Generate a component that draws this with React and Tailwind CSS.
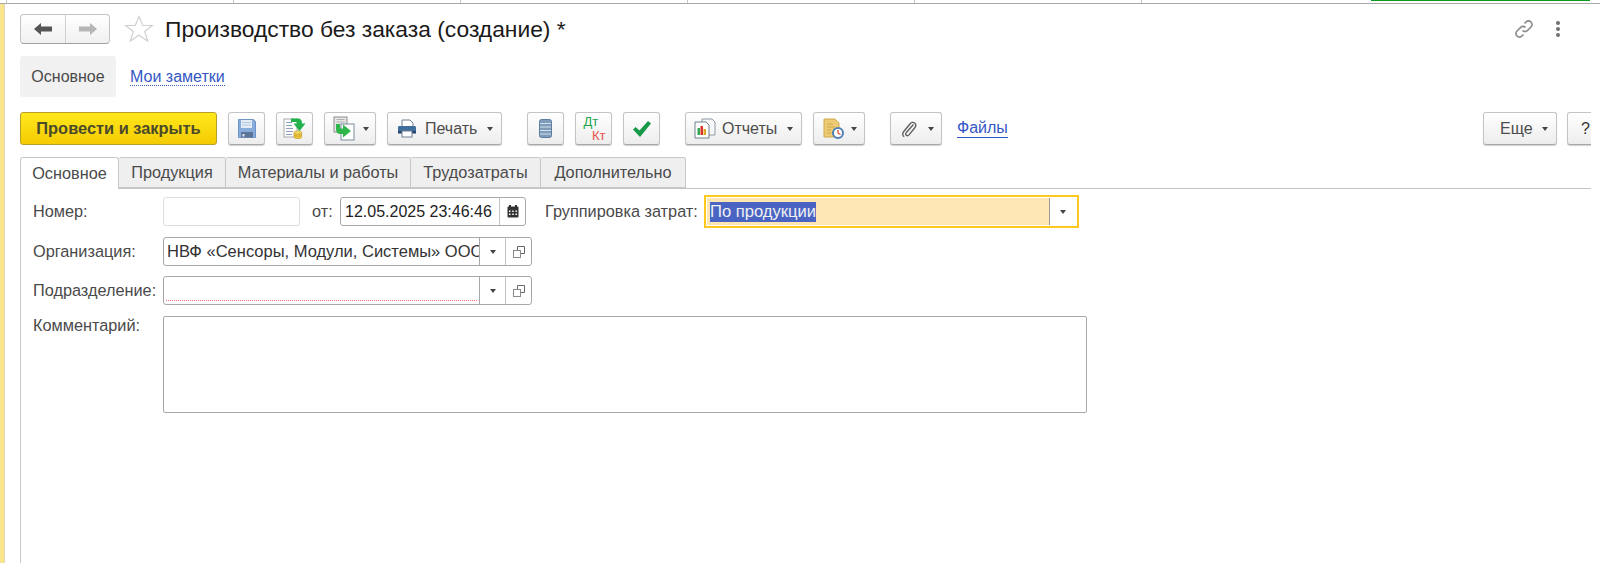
import React from 'react';

const Caret = ({ className = '' }) => (
  <svg width="6" height="4" viewBox="0 0 6 4" className={className}>
    <path d="M0 0h6L3 4z" fill="#444" />
  </svg>
);

const ToolButton = ({ className = '', children }) => (
  <div className={`flex h-[33px] shrink-0 items-center rounded-[3px] border border-[#c4c4c4] border-b-[#a8a8a8] bg-gradient-to-b from-white to-[#ededed] text-[16px] text-[#4d4d4d] shadow-[0_1px_1px_#d0d0d0] ${className}`}>
    {children}
  </div>
);

const SaveIcon = () => (
  <svg width="18" height="19" viewBox="0 0 18 19">
    <path d="M.5.500h15l2 2v16H.5z" fill="#86abdc" stroke="#6d94c6" />
    <rect x="3" y="1" width="11" height="8" fill="#e4ecf6" />
    <path d="M4 3.500h9M4 6h9" stroke="#b4c9e2" />
    <rect x="3" y="13" width="12" height="5.500" fill="#5c7594" />
    <rect x="4.500" y="15" width="2" height="2.500" fill="#dfe7f0" />
  </svg>
);

const PostIcon = () => (
  <svg width="23" height="21" viewBox="0 0 23 21">
    <rect x="1" y="1" width="13" height="18" fill="#fdfdfd" stroke="#a9a9a9" />
    <path d="M3 4.500h6M3 7.500h6M3 10.500h7M3 13.500h7M3 16.500h6" stroke="#8aa0bc" />
    <path d="M11 14.500v4.500c0 1 1.700 1.700 3.800 1.700s3.800-.7 3.800-1.700v-4.500" fill="#f0c63e" stroke="#b89322" strokeWidth=".6" />
    <path d="M11 16.500c0 1 1.700 1.700 3.800 1.700s3.800-.7 3.800-1.700" fill="none" stroke="#b89322" strokeWidth=".6" />
    <ellipse cx="14.800" cy="14.500" rx="3.800" ry="1.700" fill="#f6da6c" stroke="#b89322" strokeWidth=".6" />
    <path d="M8 .5h6.500c3.500 0 4.500 2 4.500 5h3.500L16.500 13l-6-7.500H14c0-1-.5-1.500-1.500-1.500H8z" fill="#22b14c" />
  </svg>
);

const LinkedDocsIcon = () => (
  <svg width="22" height="25" viewBox="0 0 22 25">
    <rect x="1" y="1" width="13" height="15" fill="#e6e6e6" stroke="#8d8d8d" />
    <path d="M3.500 3.500h8M3.500 6h8" stroke="#b0b0b0" />
    <rect x="8" y="8" width="13" height="16" fill="#fff" stroke="#7d8ca0" />
    <path d="M3 8h4v3c0 1 .5 1.500 1.500 1.500H10V8.500l8 6.500-8 6.500V18H8c-3.500 0-5-2-5-5z" fill="#2fb64a" />
  </svg>
);

const PrintIcon = () => (
  <svg width="20" height="19" viewBox="0 0 20 19">
    <path d="M5 1h8l3 3v5H5z" fill="#fff" stroke="#6f7f90" />
    <path d="M1 8.500c0-1 .6-1.500 1.500-1.500h15c.9 0 1.500.5 1.500 1.500V14H1z" fill="#3f6d9c" />
    <rect x="1" y="12" width="18" height="2.500" fill="#24486e" />
    <rect x="5" y="12" width="10" height="6" fill="#fff" stroke="#6f7f90" />
  </svg>
);

const StackIcon = () => (
  <svg width="13" height="19" viewBox="0 0 13 19">
    <rect x=".5" y=".5" width="12" height="18" rx="2" fill="#7d9cbb" stroke="#5c7d9e" />
    <path d="M1 4.500h11M1 8h11M1 11.500h11M1 15h11" stroke="#d5e0ea" strokeWidth="1.200" />
  </svg>
);

const CheckIcon = () => (
  <svg width="18" height="16" viewBox="0 0 18 16">
    <path d="M0 8.500l2.500-2.500 4 3.500L15 0l3 2.500L7 16z" fill="#149947" />
  </svg>
);

const ReportIcon = () => (
  <svg width="22" height="21" viewBox="0 0 22 21">
    <path d="M8 1h10l3 3v13H8z" fill="#f7f7f7" stroke="#8f9aa6" />
    <path d="M1 4h11l3 3v13H1z" fill="#fff" stroke="#6f7f8f" />
    <rect x="3.500" y="10" width="2.500" height="7" fill="#3aa655" />
    <rect x="6.500" y="8" width="2.500" height="9" fill="#d9342b" />
    <rect x="9.500" y="11" width="2.500" height="6" fill="#e0a526" />
  </svg>
);

const ScheduleIcon = () => (
  <svg width="22" height="21" viewBox="0 0 22 21">
    <path d="M1 1h11l4 4v14H1z" fill="#eccb74" stroke="#cfaa4a" />
    <path d="M4 6h6M4 9h8M4 12h4M4 15h4" stroke="#cfaa4a" />
    <circle cx="15" cy="15" r="5" fill="#fff" stroke="#4f7fb5" strokeWidth="2" />
    <path d="M15 12v3l2.500 1.500" fill="none" stroke="#d9483b" strokeWidth="1.300" />
  </svg>
);

const ClipIcon = () => (
  <svg width="16" height="18" viewBox="0 0 18 20">
    <path d="M14 5l-8 9c-1 1.200-.8 2.300 0 3s2 .6 3-.4l6.500-8c1.800-2.200 1.300-4-.2-5.300s-3.500-1-5 .8l-7 8.400c-2.200 2.700-1.500 5 .2 6.200" fill="none" stroke="#5c5c5c" strokeWidth="1.500" />
  </svg>
);

const CopyIcon = () => (
  <svg width="12" height="12" viewBox="0 0 12 12">
    <path d="M4.500 4V.5h7v7H8" fill="none" stroke="#666" />
    <rect x=".5" y="4.500" width="7" height="7" fill="none" stroke="#8a8a8a" />
  </svg>
);

const CalendarIcon = () => (
  <svg width="12" height="13" viewBox="0 0 12 13">
    <rect x="0.500" y="1.500" width="11" height="11" rx="1" fill="#333" />
    <rect x="2" y="0" width="2" height="3" fill="#333" />
    <rect x="8" y="0" width="2" height="3" fill="#333" />
    <path d="M2 5.500h1.500v1.500H2zM5.200 5.500h1.500v1.500H5.200zM8.500 5.500H10v1.500H8.500zM2 8.500h1.500V10H2zM5.200 8.500h1.500V10H5.200zM8.500 8.500H10V10H8.500z" fill="#fff" />
  </svg>
);

const PickerField = ({ text, required }) => (
  <div className="flex h-[29px] w-[369px] items-stretch rounded-[3px] border border-[#a8a8a8] bg-white">
    <div className="relative flex w-[316px] items-center overflow-hidden whitespace-nowrap border-r border-[#a8a8a8] pl-[3px] text-[16.5px] text-[#333]">
      {text}
      {required && <div className="absolute bottom-[3px] left-[2px] right-[2px] border-b border-dotted border-[#f56a6a]" />}
    </div>
    <div className="flex w-[26px] items-center justify-center border-r border-[#c4c4c4]"><Caret /></div>
    <div className="flex flex-1 items-center justify-center"><CopyIcon /></div>
  </div>
);

const tabs = [
  ['Продукция', 'w-[107px]'],
  ['Материалы и работы', 'w-[185px]'],
  ['Трудозатраты', 'w-[130px]'],
  ['Дополнительно', 'w-[145px]'],
];

export default function App() {
  return (
    <div className="flex h-[563px] w-[1600px] flex-col overflow-hidden bg-white font-['Liberation_Sans',Arial,sans-serif] text-[16px] text-[#4a4a4a]">
      {/* верхняя полоса вкладок окна */}
      <div className="flex h-[4px] shrink-0 border-b border-[#a9a9a9] pl-[6px]">
        <div className="w-[227px] border-l border-[#c8c8c8]" />
        <div className="w-[227px] border-l border-[#c8c8c8]" />
        <div className="w-[227px] border-l border-[#c8c8c8]" />
        <div className="w-[227px] border-l border-[#c8c8c8]" />
        <div className="w-[227px] border-l border-[#c8c8c8]" />
        <div className="w-[227px] border-l border-[#c8c8c8]" />
        <div className="ml-[3px] h-[1px] w-[219px] bg-[#0b9a1f]" />
      </div>

      <div className="flex min-h-0 flex-1">
        <div className="w-[5px] shrink-0 border-r border-[#e0d9b8] bg-[#fbe48e]" />

        <div className="relative w-[1586px] shrink-0 overflow-hidden">
          {/* заголовок */}
          <div className="mt-[10px] flex h-[30px] items-center pl-[15px]">
            <div className="flex h-[30px] w-[90px] rounded-[4px] border border-[#c4c4c4] border-b-[#a0a0a0] bg-gradient-to-b from-white to-[#f0f0f0]">
              <div className="flex w-[45px] items-center justify-center border-r border-[#d0d0d0]">
                <svg width="18" height="12" viewBox="0 0 18 12"><path d="M0 6l7-6v3.500h11v5H7V12z" fill="#555" /></svg>
              </div>
              <div className="flex flex-1 items-center justify-center">
                <svg width="18" height="12" viewBox="0 0 18 12"><path d="M18 6l-7-6v3.500H0v5h11V12z" fill="#b5b5b5" /></svg>
              </div>
            </div>
            <svg width="30" height="28" viewBox="0 0 30 28" className="ml-[14px]">
              <path d="M15 1.500l3.800 9h9.700l-7.800 6 3 9.500-8.700-5.800L6.300 26l3-9.500-7.800-6h9.700z" fill="#fff" stroke="#d0d0d0" strokeWidth="1.200" />
            </svg>
            <div className="ml-[11px] whitespace-nowrap text-[22.8px] leading-[30px] text-[#1a1a1a]">Производство без заказа (создание) *</div>
            <svg width="20" height="20" viewBox="0 0 20 20" className="ml-auto" fill="none" stroke="#8a8a8a" strokeWidth="1.700">
              <path d="M8.500 11.500a3.500 3.500 0 0 0 5 0l3.500-3.500a3.500 3.500 0 0 0-5-5l-1.500 1.500" />
              <path d="M11.500 8.500a3.500 3.500 0 0 0-5 0L3 12a3.500 3.500 0 0 0 5 5l1.500-1.500" />
            </svg>
            <div className="ml-[22px] mr-[31px] flex flex-col gap-[2px]">
              <div className="size-[4px] rounded-full bg-[#707070]" />
              <div className="size-[4px] rounded-full bg-[#707070]" />
              <div className="size-[4px] rounded-full bg-[#707070]" />
            </div>
          </div>

          {/* панель разделов */}
          <div className="mt-[12px] flex h-[41px] items-center pl-[15px]">
            <div className="flex h-[41px] w-[96px] items-center justify-center rounded-[3px] bg-[#f1f1f1] text-[#4a4a4a]">Основное</div>
            <div className="ml-[14px] border-b border-dotted border-[#3a5fc0] leading-[17px] text-[#3457c4]">Мои заметки</div>
          </div>

          {/* командная панель */}
          <div className="mt-[15px] flex h-[33px] items-center pl-[15px]">
            <div className="flex h-[33px] w-[197px] shrink-0 items-center justify-center rounded-[3px] border border-[#b89f2a] bg-gradient-to-b from-[#ffe81a] to-[#f4cb00] text-[16.4px] font-bold text-[#4a4a2a]">Провести и закрыть</div>
            <ToolButton className="ml-[11px] w-[37px] justify-center"><SaveIcon /></ToolButton>
            <ToolButton className="ml-[11px] w-[37px] justify-center"><PostIcon /></ToolButton>
            <ToolButton className="ml-[11px] w-[52px] pl-[8px]"><LinkedDocsIcon /><Caret className="ml-[8px]" /></ToolButton>
            <ToolButton className="ml-[11px] w-[115px] pl-[9px]"><PrintIcon /><span className="ml-[8px]">Печать</span><Caret className="ml-[10px]" /></ToolButton>
            <ToolButton className="ml-[25px] w-[37px] justify-center"><StackIcon /></ToolButton>
            <ToolButton className="ml-[11px] w-[37px] justify-center">
              <div className="relative h-[27px] w-[24px] text-[13px] leading-[13px]">
                <span className="absolute left-[2px] top-[0px] text-[#1fa552]">Дт</span>
                <span className="absolute right-[0px] bottom-[0px] text-[#e8504a]">Кт</span>
              </div>
            </ToolButton>
            <ToolButton className="ml-[11px] w-[37px] justify-center"><CheckIcon /></ToolButton>
            <ToolButton className="ml-[25px] w-[117px] pl-[8px]"><ReportIcon /><span className="ml-[6px]">Отчеты</span><Caret className="ml-[10px]" /></ToolButton>
            <ToolButton className="ml-[11px] w-[52px] pl-[9px]"><ScheduleIcon /><Caret className="ml-[6px]" /></ToolButton>
            <ToolButton className="ml-[25px] w-[52px] pl-[10px]"><ClipIcon /><Caret className="ml-[11px]" /></ToolButton>
            <div className="ml-[15px] border-b border-[#2a55c0] leading-[18px] text-[#3457c4]">Файлы</div>
            <ToolButton className="ml-auto w-[74px] pl-[16px]">Еще<Caret className="ml-[9px]" /></ToolButton>
            <ToolButton className="ml-[10px] mr-[-10px] w-[34px] pl-[13px] text-[#333]">?</ToolButton>
          </div>

          {/* закладки формы */}
          <div className="mt-[12px] ml-[15px] flex h-[32px] border-b border-[#c4c4c4] text-[16.3px]">
            <div className="mb-[-1px] flex h-[32px] w-[99px] items-center justify-center rounded-t-[3px] border border-b-0 border-[#c8c8c8] bg-white">Основное</div>
            {tabs.map(([label, width]) => (
              <div key={label} className={`flex h-[31px] items-center justify-center rounded-t-[2px] border border-l-0 border-[#c8c8c8] bg-[#efefef] ${width}`}>{label}</div>
            ))}
          </div>

          {/* реквизиты */}
          <div className="ml-[15px] h-[400px] border-l border-[#c8c8c8] pl-[12px] pt-[6px] text-[16.3px]">
            <div className="flex h-[33px] items-center">
              <div className="w-[130px]">Номер:</div>
              <div className="h-[29px] w-[137px] rounded-[3px] border border-[#dedede]" />
              <div className="ml-[12px] w-[28px]">от:</div>
              <div className="flex h-[29px] w-[186px] items-stretch rounded-[3px] border border-[#a8a8a8]">
                <div className="flex w-[159px] items-center whitespace-nowrap border-r border-[#c4c4c4] pl-[4px] text-[16px] text-[#222]">12.05.2025 23:46:46</div>
                <div className="flex flex-1 items-center justify-center"><CalendarIcon /></div>
              </div>
              <div className="ml-[19px] w-[159px] whitespace-nowrap">Группировка затрат:</div>
              <div className="flex h-[33px] w-[375px] items-stretch border-2 border-[#ffc81e] bg-white p-[1px]">
                <div className="flex w-[343px] items-center border-r border-[#9a9a9a] bg-[#fde6b3] pl-[3px]">
                  <span className="bg-[#4a64c4] text-[16.6px] leading-[20px] text-[#f0f0f0]">По продукции</span>
                </div>
                <div className="flex flex-1 items-center justify-center"><Caret /></div>
              </div>
            </div>
            <div className="mt-[9px] flex items-center">
              <div className="w-[130px]">Организация:</div>
              <PickerField text="НВФ «Сенсоры, Модули, Системы» ООО" />
            </div>
            <div className="mt-[10px] flex items-center">
              <div className="w-[130px] whitespace-nowrap">Подразделение:</div>
              <PickerField text="" required />
            </div>
            <div className="mt-[11px] flex items-start">
              <div className="w-[130px] leading-[18px]">Комментарий:</div>
              <div className="h-[97px] w-[924px] rounded-[2px] border border-[#a8a8a8]" />
            </div>
          </div>
        </div>
      </div>
    </div>
  );
}
